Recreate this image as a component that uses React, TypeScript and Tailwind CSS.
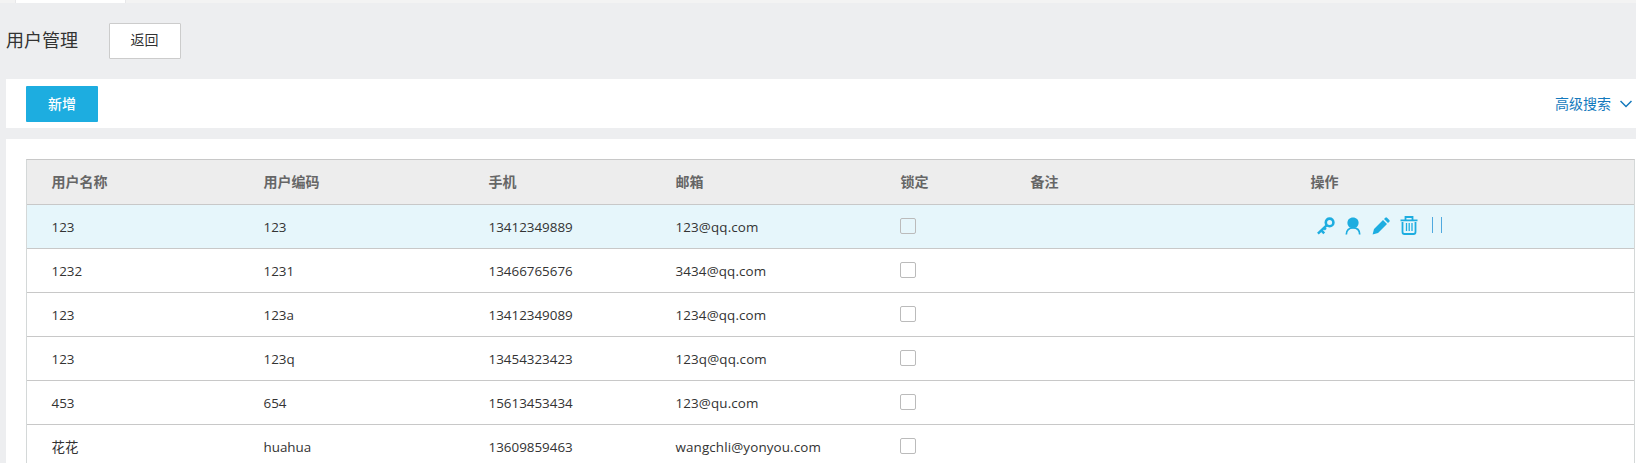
import React from "react";

type User = { name: string; code: string; phone: string; mail: string };

const users: User[] = [
  { name: "123", code: "123", phone: "13412349889", mail: "123@qq.com" },
  { name: "1232", code: "1231", phone: "13466765676", mail: "3434@qq.com" },
  { name: "123", code: "123a", phone: "13412349089", mail: "1234@qq.com" },
  { name: "123", code: "123q", phone: "13454323423", mail: "123q@qq.com" },
  { name: "453", code: "654", phone: "15613453434", mail: "123@qu.com" },
  { name: "花花", code: "huahua", phone: "13609859463", mail: "wangchli@yonyou.com" },
];

const headers = ["用户名称", "用户编码", "手机", "邮箱", "锁定", "备注", "操作"];
const grid = "grid grid-cols-[212px_225px_187px_225px_130px_280px_1fr] items-center pl-[24.5px]";

function KeyIcon() {
  return (
    <svg width="18" height="18" viewBox="0 0 18 18" fill="none" stroke="currentColor">
      <circle cx="12.6" cy="5.4" r="3.8" strokeWidth="2.6" />
      <path d="M9.900 8.200.9 16.600M4.400 13.400l2.800 3M7.200 10.800l1.600 1.800" strokeWidth="2.500" />
    </svg>
  );
}

function PersonIcon() {
  return (
    <svg width="16" height="18" viewBox="0 0 16 18" fill="none" stroke="currentColor">
      <path d="M8 .4c3.400 0 5.600 2.400 5.600 5.400 0 2.600-1.600 5.400-5.600 5.400S2.400 8.400 2.400 5.800C2.400 2.800 4.600.4 8 .4z" fill="currentColor" stroke="none" />
      <path d="M1.300 17.400C1.300 13.200 4 10.800 8 10.800s6.700 2.400 6.700 6.600" strokeWidth="1.700" />
    </svg>
  );
}

function PencilIcon() {
  return (
    <svg width="18" height="18" viewBox="0 0 18 18" fill="currentColor">
      <path d="M.6 17.400 2 12 11 3l4 4-9 9zM12 2l1.300-1.300q.8-.8 1.700 0l2.300 2.300q.8.900 0 1.700L16 6z" />
    </svg>
  );
}

function TrashIcon() {
  return (
    <svg width="18" height="19" viewBox="0 0 18 19" fill="none" stroke="currentColor" strokeWidth="1.800">
      <path d="M.5 4.300h17M5.500 4V1h7v3M2.500 6v10q0 2 2 2h9q2 0 2-2V6" />
      <path d="M6.500 7v8M9.200 7v8M12 7v8" strokeWidth="1.300" />
    </svg>
  );
}

function Actions() {
  return (
    <div className="flex h-[19px] -translate-y-px items-start pl-[6.5px] text-[#1dade0]">
      <span className="mr-[10px] mt-px"><KeyIcon /></span>
      <span className="mr-[11px] mt-px"><PersonIcon /></span>
      <span className="mr-[10px] mt-px"><PencilIcon /></span>
      <span className="mr-[14px]"><TrashIcon /></span>
      <span className="mt-px h-4 w-[10px] border-x border-[#4fa9df]" />
    </div>
  );
}

export default function App() {
  return (
    <div className="h-[463px] w-full overflow-hidden bg-[#edeef0] font-['Open_Sans','Noto_Sans_CJK_SC',sans-serif] text-[13.400px] text-[#333]">
      <div className="flex h-[3px] bg-[#f3f3f3] pl-[15px]">
        <div className="w-[111px] border-x border-[#e8e8ea] bg-white" />
      </div>
      <div className="flex h-[76px] items-center pl-1.5">
        <h1 className="w-[103px] pb-[3px] text-[18px] leading-6">用户管理</h1>
        <button className="h-9 w-[72px] rounded-[1px] border border-[#ccc] bg-white pb-[3px] pr-px text-[14px]">返回</button>
      </div>
      <div className="ml-1.5 flex h-[49px] items-center justify-between bg-white pl-5 pr-1">
        <button className="h-9 w-[72px] rounded-[1px] bg-[#1dade0] text-[14px] font-medium text-white">新增</button>
        <button className="flex items-center gap-[9px] text-[14px] text-[#1479bd]">
          <span>高级搜索</span>
          <svg width="12" height="8" viewBox="0 0 12 8" fill="none" stroke="currentColor" strokeWidth="1.500">
            <path d="m.5 1 5.500 5.500L11.500 1" />
          </svg>
        </button>
      </div>
      <div className="ml-1.5 mt-[11px] h-[324px] bg-white pl-5 pr-px pt-5">
        <div className="border-x border-t border-x-[#d4d8d8] border-t-[#c8c8c8]">
          <div className={`${grid} h-[45px] border-b border-[#c8c8c8] bg-[#ededed] pb-0.5 text-[14px] font-bold text-[#666]`}>
            {headers.map((h) => (
              <div key={h}>{h}</div>
            ))}
          </div>
          {users.map((u, i) => (
            <div key={i} className={`${grid} h-11 border-b border-[#c8c8c8] ${i === 0 ? "bg-[#e6f6fb]" : "bg-white"}`}>
              <div className="pt-0.5">{u.name}</div>
              <div className="pt-0.5">{u.code}</div>
              <div className="pt-0.5">{u.phone}</div>
              <div className="pt-0.5 tracking-[0.13px]">{u.mail}</div>
              <div className="-ml-[0.5px] size-4 -translate-y-px rounded-[2px] border border-[#bbb]" />
              <div />
              {i === 0 ? <Actions /> : <div />}
            </div>
          ))}
        </div>
      </div>
    </div>
  );
}
